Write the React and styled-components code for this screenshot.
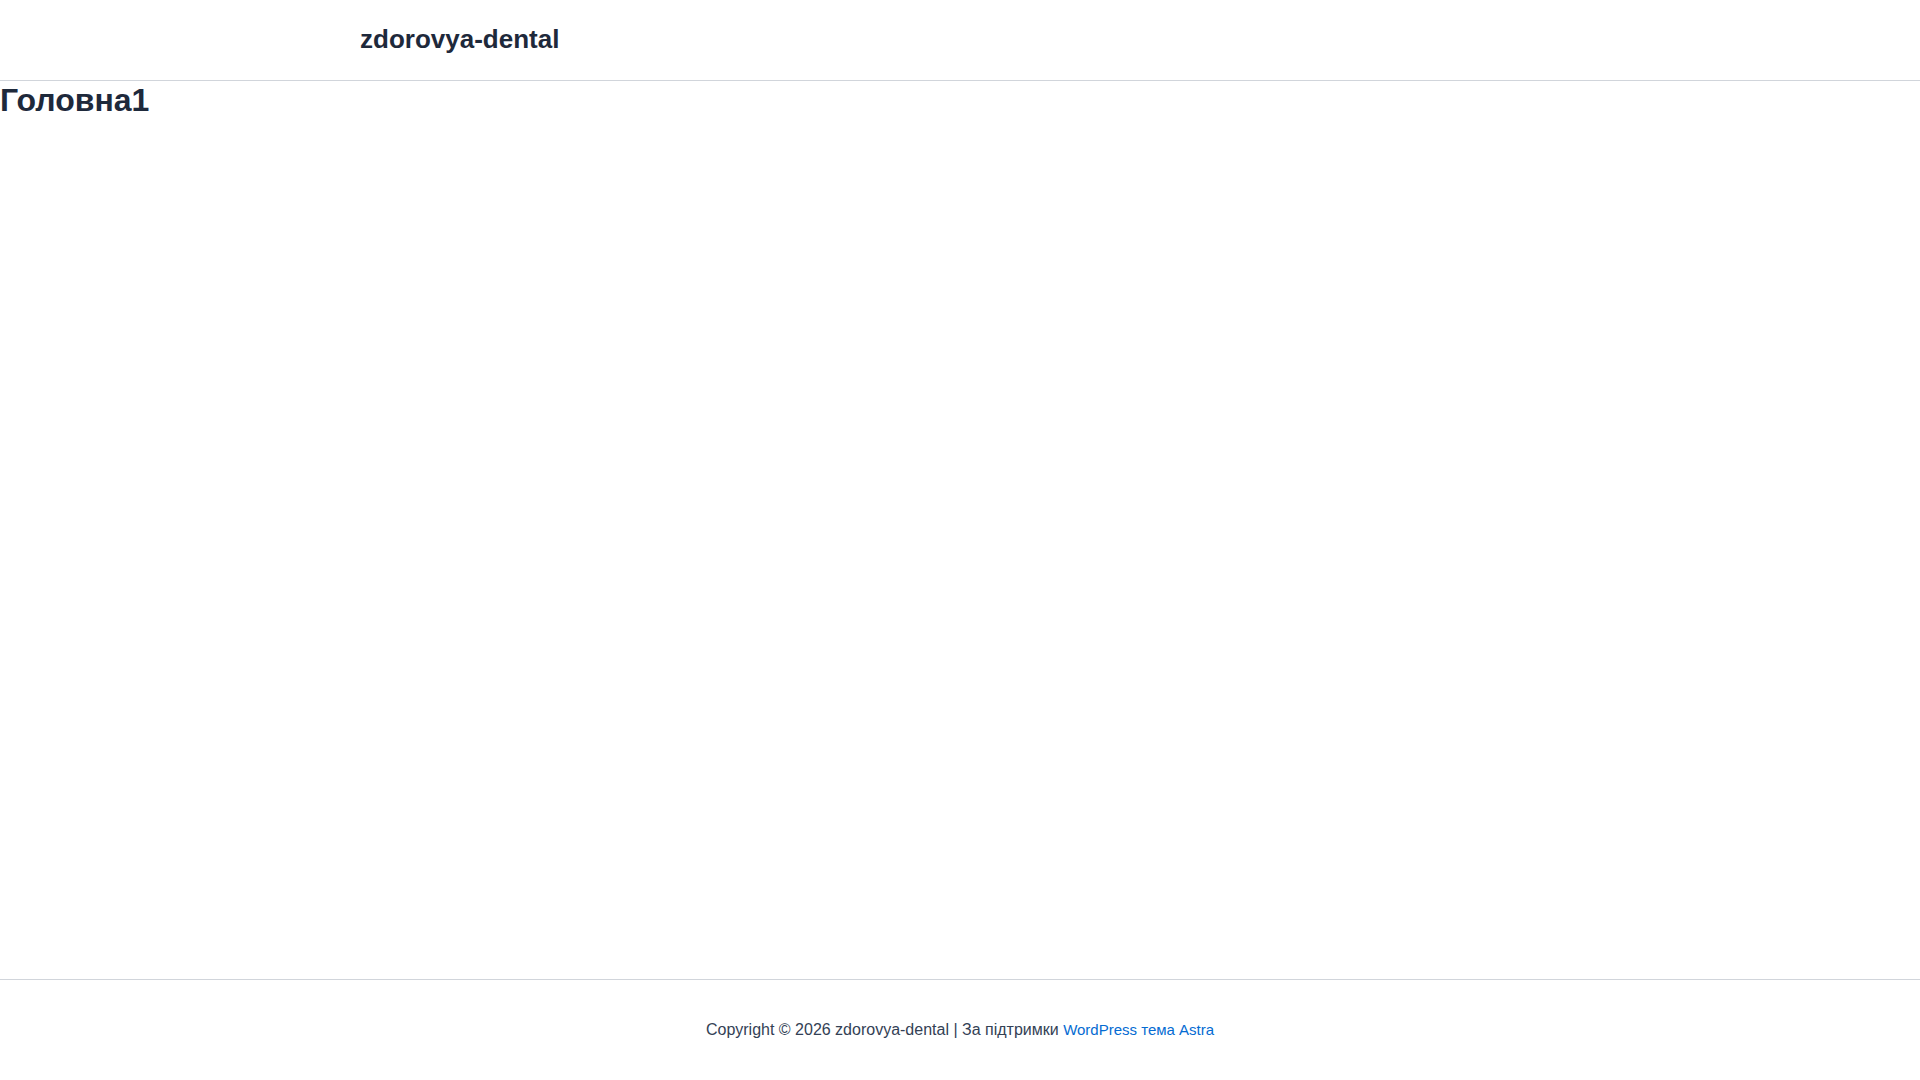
import React from "react";
import styled, { createGlobalStyle } from "styled-components";

const Global = createGlobalStyle`
  html, body { margin: 0; padding: 0; background: #ffffff; }
  body { font-family: "Liberation Sans", Arial, sans-serif; color: #334155; }
  * { box-sizing: border-box; }
`;

const Page = styled.div`
  min-height: 100vh;
  display: flex;
  flex-direction: column;
`;

const Header = styled.header`
  height: 81px;
  border-bottom: 1px solid #d1d5db;
  display: flex;
  justify-content: center;
`;

const HeaderInner = styled.div`
  width: 1240px;
  padding: 0 20px;
  display: flex;
  align-items: center;
`;

const SiteTitle = styled.a`
  font-size: 26px;
  font-weight: 700;
  color: #1e293b;
  text-decoration: none;
  line-height: 1.2;
`;

const Main = styled.main`
  flex: 1;
`;

const PageTitle = styled.h1`
  margin: 0;
  font-size: 32px;
  font-weight: 700;
  line-height: 1.2;
  color: #1e293b;
`;

const Footer = styled.footer`
  border-top: 1px solid #d1d5db;
  height: 101px;
  display: flex;
  align-items: center;
  justify-content: center;
`;

const FooterText = styled.div`
  font-size: 16px;
  line-height: 1.6;
  color: #334155;
`;

const FooterLink = styled.a`
  font-size: 15px;
  color: #046bd2;
  text-decoration: none;
`;

export default function App() {
  return (
    <>
      <Global />
      <Page>
        <Header>
          <HeaderInner>
            <SiteTitle href="#">zdorovya-dental</SiteTitle>
          </HeaderInner>
        </Header>
        <Main>
          <PageTitle>Головна1</PageTitle>
        </Main>
        <Footer>
          <FooterText>
            Copyright © 2026 zdorovya-dental | За підтримки{" "}
            <FooterLink href="#">WordPress тема Astra</FooterLink>
          </FooterText>
        </Footer>
      </Page>
    </>
  );
}
